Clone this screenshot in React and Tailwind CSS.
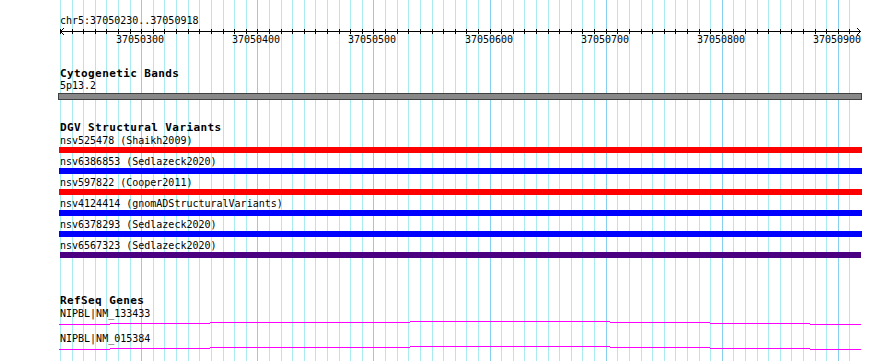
import React from "react";

const START = 37050230;
const PX = 1.161;
const xOf = (bp) => Math.round(60 + (bp - START) * PX);

const ticks = [];
for (let i = 0; i <= 68; i++) ticks.push(START + i * 10);
const majors = ticks.filter((t) => t % 100 === 0);

const variants = [
  { id: "nsv525478", src: "Shaikh2009", color: "bg-[#ff0000]" },
  { id: "nsv6386853", src: "Sedlazeck2020", color: "bg-[#0000ff]" },
  { id: "nsv597822", src: "Cooper2011", color: "bg-[#ff0000]" },
  { id: "nsv4124414", src: "gnomADStructuralVariants", color: "bg-[#0000ff]" },
  { id: "nsv6378293", src: "Sedlazeck2020", color: "bg-[#0000ff]" },
  { id: "nsv6567323", src: "Sedlazeck2020", color: "bg-[#4b0082]", purple: true },
];

// stepped intron line, x ranges with row offsets
const steps = [
  [59, 110, 4],
  [110, 210, 3],
  [210, 410, 2],
  [410, 610, 1],
  [610, 710, 2],
  [710, 810, 3],
  [810, 861, 4],
];

const Grid = () => (
  <svg className="absolute inset-0" width="890" height="361">
    {ticks.map((t) => (
      <rect
        key={t}
        x={xOf(t)}
        y="0"
        width="1"
        height="361"
        fill={t % 100 === 0 ? "#88d0f0" : "#a8ecf2"}
      />
    ))}
  </svg>
);

const Ruler = () => (
  <svg width="890" height="20" className="block">
    <rect x="60" y="4" width="801" height="1" fill="#000" />
    {ticks.map((t) => (
      <rect key={t} x={xOf(t)} y="2" width="1" height="5" fill="#000" />
    ))}
    <path d="M64 1 L60.5 4.5 L64 8" stroke="#000" fill="none" />
    <path d="M857 1 L860.5 4.5 L857 8" stroke="#000" fill="none" />
    {majors.map((t) => (
      <text
        key={t}
        x={xOf(t) - 1}
        y="16.4"
        textAnchor="middle"
        fontSize="10"
        fontFamily="'DejaVu Sans Mono', monospace"
        fill="#000"
      >
        {t}
      </text>
    ))}
  </svg>
);

const GeneLine = () => (
  <svg width="890" height="13" className="block">
    {steps.map(([a, b, y]) => (
      <rect key={a} x={a} y={y} width={b - a} height="1" fill="#ff00ff" />
    ))}
  </svg>
);

const Heading = ({ children, className = "" }) => (
  <div className={`pl-[60px] h-[12px] text-[11px] leading-[12px] font-bold tracking-[0.4px] ${className}`}>
    {children}
  </div>
);

const Label = ({ children, className = "" }) => (
  <div className={`pl-[60px] h-[12px] text-[10px] leading-[12px] whitespace-pre ${className}`}>
    {children}
  </div>
);

export default function App() {
  return (
    <div
      className="relative w-[890px] h-[361px] overflow-hidden bg-white text-black"
      style={{ fontFamily: "'DejaVu Sans Mono', monospace" }}
    >
      <Grid />
      <div className="relative flex flex-col pt-[15px]">
        <Label>chr5:37050230..37050918</Label>
        <Ruler />

        <Heading className="mt-[21px]">Cytogenetic Bands</Heading>
        <Label>5p13.2</Label>
        <div className="ml-[58px] mt-[1px] w-[804px] h-[7px] border border-[#404040] bg-[#888888]" />

        <Heading className="mt-[22px]">DGV Structural Variants</Heading>
        <div className="flex flex-col gap-[3px] mt-[1px]">
          {variants.map((v) => (
            <div key={v.id} className="flex flex-col">
              <Label>{`${v.id} (${v.src})`}</Label>
              <div
                className={`h-[6px] ${v.color} ${
                  v.purple ? "ml-[60px] w-[801px]" : "ml-[59px] w-[803px]"
                }`}
              />
            </div>
          ))}
        </div>

        <Heading className="mt-[37px]">RefSeq Genes</Heading>
        <Label className="mt-[1px]">NIPBL|NM_133433</Label>
        <GeneLine />
        <Label>NIPBL|NM_015384</Label>
        <GeneLine />
      </div>
    </div>
  );
}
